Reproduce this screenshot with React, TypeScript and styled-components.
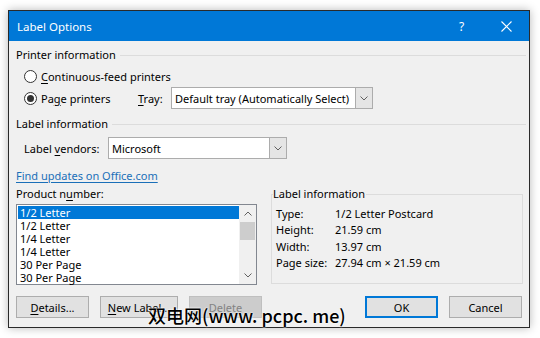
import styled, { createGlobalStyle } from 'styled-components';

const GlobalStyle = createGlobalStyle`
  html, body {
    margin: 0;
    padding: 0;
    background: #ffffff;
  }
  body {
    font-family: "Noto Sans", "Open Sans", sans-serif;
    font-size: 11px;
    color: #000;
  }
`;

const Page = styled.div`
  position: relative;
  width: 540px;
  height: 338px;
  padding: 10px 0 0 8px;
  box-sizing: border-box;
`;

const Dialog = styled.div`
  width: 522px;
  height: 318px;
  box-sizing: border-box;
  border: 1px solid #2a2a2a;
  background: #f0f0f0;
  box-shadow: 0 0 9px rgba(0, 0, 0, 0.28);
  display: flex;
  flex-direction: column;
`;

const TitleBar = styled.div`
  height: 30px;
  background: #0078d7;
  color: #fff;
  display: flex;
  align-items: center;
  padding-left: 8px;
  font-size: 11.5px;
`;

const Title = styled.div`
  flex: 1;
`;

const TitleButton = styled.div`
  width: 45px;
  height: 30px;
  display: flex;
  align-items: center;
  justify-content: center;
  font-size: 12px;
`;

const Body = styled.div`
  flex: 1;
  padding: 7px 6px 0 7px;
  display: flex;
  flex-direction: column;
`;

const GroupHeader = styled.div<{ $top?: number }>`
  height: 14px;
  line-height: 14px;
  display: flex;
  align-items: center;
  gap: 4px;
  margin-top: ${(p) => p.$top ?? 0}px;
  margin-right: -3px;
  &::after {
    content: '';
    flex: 1;
    height: 1px;
    background: #dcdcdc;
  }
`;

const Row = styled.div<{ $top?: number; $indent?: number }>`
  height: 22px;
  display: flex;
  align-items: center;
  margin-top: ${(p) => p.$top ?? 0}px;
  padding-left: ${(p) => p.$indent ?? 0}px;
`;

const Radio = styled.span<{ $checked?: boolean }>`
  width: 13px;
  height: 13px;
  box-sizing: border-box;
  border: 1px solid #333;
  border-radius: 50%;
  background: #fff;
  display: inline-flex;
  align-items: center;
  justify-content: center;
  margin-right: 4px;
  &::after {
    content: '';
    width: 7px;
    height: 7px;
    border-radius: 50%;
    background: ${(p) => (p.$checked ? '#333' : 'transparent')};
  }
`;

const Label = styled.span<{ $width?: number }>`
  display: inline-block;
  width: ${(p) => (p.$width ? `${p.$width}px` : 'auto')};
  white-space: nowrap;
`;

const Key = styled.u`
  text-underline-offset: 2px;
`;

const Combo = styled.div<{ $width: number }>`
  width: ${(p) => p.$width}px;
  height: 22px;
  box-sizing: border-box;
  border: 1px solid #acacac;
  background: #fff;
  display: flex;
  align-items: stretch;
`;

const ComboText = styled.div`
  flex: 1;
  padding-left: 3px;
  display: flex;
  align-items: center;
  white-space: nowrap;
  overflow: hidden;
`;

const ComboButton = styled.div`
  width: 16px;
  background: #e5e5e5;
  border-left: 1px solid #acacac;
  display: flex;
  align-items: center;
  justify-content: center;
`;

const Link = styled.div`
  margin-top: 10px;
  height: 14px;
  line-height: 14px;
  color: #1a6fb8;
  text-decoration: underline;
  text-underline-offset: 2px;
`;

const Columns = styled.div`
  margin-top: 4px;
  display: flex;
  gap: 14px;
`;

const LeftColumn = styled.div`
  width: 241px;
  display: flex;
  flex-direction: column;
`;

const FieldLabel = styled.div`
  height: 14px;
  line-height: 14px;
`;

const ListBox = styled.div`
  margin-top: 3px;
  height: 81px;
  box-sizing: border-box;
  border: 1px solid #828790;
  background: #fff;
  display: flex;
`;

const ListItems = styled.div`
  flex: 1;
  padding-top: 1px;
`;

const ListItem = styled.div<{ $selected?: boolean }>`
  height: 13px;
  line-height: 13px;
  padding-left: 2px;
  margin-left: 1px;
  background: ${(p) => (p.$selected ? '#0078d7' : 'transparent')};
  color: ${(p) => (p.$selected ? '#fff' : '#000')};
  white-space: nowrap;
`;

const ScrollBar = styled.div`
  width: 17px;
  background: #f0f0f0;
  display: flex;
  flex-direction: column;
`;

const ScrollArrow = styled.div`
  height: 17px;
  display: flex;
  align-items: center;
  justify-content: center;
`;

const ScrollTrack = styled.div`
  flex: 1;
  padding: 0 1px;
`;

const ScrollThumb = styled.div`
  height: 18px;
  background: #cdcdcd;
`;

const InfoBox = styled.fieldset`
  flex: 1;
  margin: 0;
  padding: 4px 4px 11px 4px;
  height: 97px;
  box-sizing: border-box;
  border: 1px solid #dcdcdc;
`;

const InfoLegend = styled.legend`
  padding: 0 1px 0 0;
  margin-left: -3px;
  line-height: 14px;
`;

const InfoRow = styled.div`
  height: 16.5px;
  display: flex;
  align-items: center;
  white-space: nowrap;
`;

const InfoKey = styled.span`
  width: 59px;
`;

const ButtonRow = styled.div`
  margin-top: 11px;
  display: flex;
  gap: 11px;
  padding-right: 1px;
`;

const Spacer = styled.div`
  flex: 1;
`;

const Button = styled.div<{ $variant?: 'default' | 'disabled'; $width?: number }>`
  width: ${(p) => p.$width ?? 73}px;
  height: 22px;
  box-sizing: border-box;
  display: flex;
  align-items: center;
  justify-content: center;
  background: ${(p) => (p.$variant === 'disabled' ? '#cccccc' : '#e1e1e1')};
  color: ${(p) => (p.$variant === 'disabled' ? '#838383' : '#000')};
  border: ${(p) =>
    p.$variant === 'default'
      ? '2px solid #0078d7'
      : p.$variant === 'disabled'
      ? '1px solid #bfbfbf'
      : '1px solid #adadad'};
`;

const Watermark = styled.div`
  position: absolute;
  left: 148px;
  top: 303px;
  font-family: "Noto Sans CJK SC", "DejaVu Sans", sans-serif;
  font-size: 18px;
  font-weight: 500;
  line-height: 24px;
  color: #000;
  white-space: nowrap;
  text-shadow: 0 0 2px #fff, 0 0 2px #fff;
`;

const Chevron = ({ up }: { up?: boolean }) => (
  <svg width="8" height="5" viewBox="0 0 8 5">
    <polyline
      points={up ? '0.5,4.5 4,1 7.5,4.5' : '0.5,0.5 4,4 7.5,0.5'}
      fill="none"
      stroke="#606060"
      strokeWidth="1"
    />
  </svg>
);

const products = ['1/2 Letter', '1/2 Letter', '1/4 Letter', '1/4 Letter', '30 Per Page', '30 Per Page'];

const info: [string, string][] = [
  ['Type:', '1/2 Letter Postcard'],
  ['Height:', '21.59 cm'],
  ['Width:', '13.97 cm'],
  ['Page size:', '27.94 cm × 21.59 cm'],
];

export default function App() {
  return (
    <>
      <GlobalStyle />
      <Page>
        <Dialog>
          <TitleBar>
            <Title>Label Options</Title>
            <TitleButton>?</TitleButton>
            <TitleButton>
              <svg width="11" height="11" viewBox="0 0 11 11">
                <path d="M0.5 0.5 L10.5 10.5 M10.5 0.5 L0.5 10.5" stroke="#fff" strokeWidth="1.1" />
              </svg>
            </TitleButton>
          </TitleBar>
          <Body>
            <GroupHeader>Printer information</GroupHeader>
            <Row $top={3} $indent={8}>
              <Radio />
              <Label>
                <Key>C</Key>ontinuous-feed printers
              </Label>
            </Row>
            <Row $indent={8}>
              <Radio $checked />
              <Label $width={97}>
                Pa<Key>g</Key>e printers
              </Label>
              <Label $width={33}>
                <Key>T</Key>ray:
              </Label>
              <Combo $width={202}>
                <ComboText>Default tray (Automatically Select)</ComboText>
                <ComboButton>
                  <Chevron />
                </ComboButton>
              </Combo>
            </Row>
            <GroupHeader $top={8}>Label information</GroupHeader>
            <Row $top={6} $indent={8}>
              <Label $width={84}>
                Label <Key>v</Key>endors:
              </Label>
              <Combo $width={179}>
                <ComboText>Microsoft</ComboText>
                <ComboButton>
                  <Chevron />
                </ComboButton>
              </Combo>
            </Row>
            <Link>Find updates on Office.com</Link>
            <Columns>
              <LeftColumn>
                <FieldLabel>
                  Product n<Key>u</Key>mber:
                </FieldLabel>
                <ListBox>
                  <ListItems>
                    {products.map((p, i) => (
                      <ListItem key={i} $selected={i === 0}>
                        {p}
                      </ListItem>
                    ))}
                  </ListItems>
                  <ScrollBar>
                    <ScrollArrow>
                      <Chevron up />
                    </ScrollArrow>
                    <ScrollTrack>
                      <ScrollThumb />
                    </ScrollTrack>
                    <ScrollArrow>
                      <Chevron />
                    </ScrollArrow>
                  </ScrollBar>
                </ListBox>
              </LeftColumn>
              <InfoBox>
                <InfoLegend>Label information</InfoLegend>
                {info.map(([k, v]) => (
                  <InfoRow key={k}>
                    <InfoKey>{k}</InfoKey>
                    <span>{v}</span>
                  </InfoRow>
                ))}
              </InfoBox>
            </Columns>
            <ButtonRow>
              <Button>
                <span>
                  <Key>D</Key>etails...
                </span>
              </Button>
              <Button $width={78}>
                <span>
                  <Key>N</Key>ew Label...
                </span>
              </Button>
              <Button $variant="disabled">Delete</Button>
              <Spacer />
              <Button $variant="default">OK</Button>
              <Button>Cancel</Button>
            </ButtonRow>
          </Body>
        </Dialog>
        <Watermark>双电网(www. pcpc. me)</Watermark>
      </Page>
    </>
  );
}
